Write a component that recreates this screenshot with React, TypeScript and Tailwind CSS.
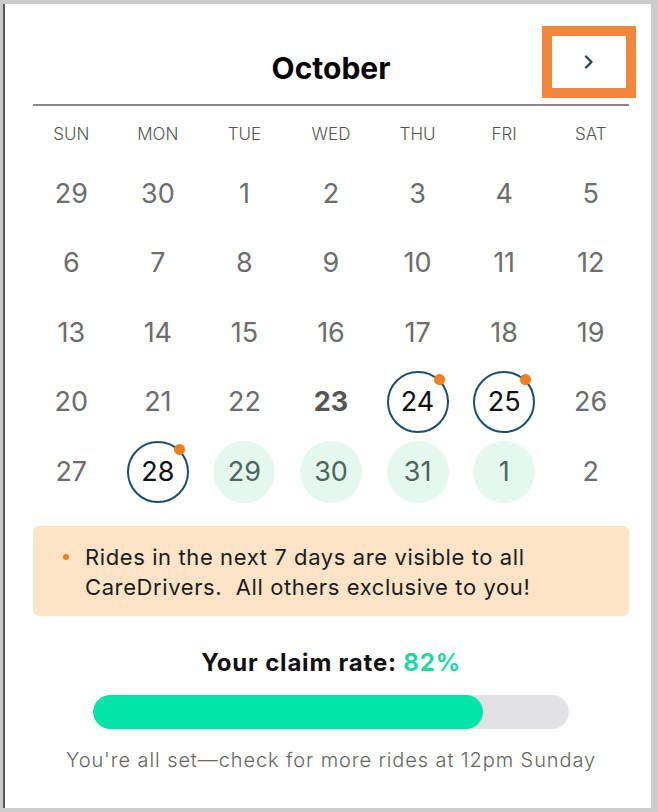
import React from "react";

type Day = {
   n: number;
   kind?: "muted" | "today" | "ride" | "open";
};

const weekdays = ["SUN", "MON", "TUE", "WED", "THU", "FRI", "SAT"];

const weeks: Day[][] = [
   [{ n: 29 }, { n: 30 }, { n: 1 }, { n: 2 }, { n: 3 }, { n: 4 }, { n: 5 }],
   [{ n: 6 }, { n: 7 }, { n: 8 }, { n: 9 }, { n: 10 }, { n: 11 }, { n: 12 }],
   [{ n: 13 }, { n: 14 }, { n: 15 }, { n: 16 }, { n: 17 }, { n: 18 }, { n: 19 }],
   [
      { n: 20 },
      { n: 21 },
      { n: 22 },
      { n: 23, kind: "today" },
      { n: 24, kind: "ride" },
      { n: 25, kind: "ride" },
      { n: 26 },
   ],
   [
      { n: 27 },
      { n: 28, kind: "ride" },
      { n: 29, kind: "open" },
      { n: 30, kind: "open" },
      { n: 31, kind: "open" },
      { n: 1, kind: "open" },
      { n: 2 },
   ],
];

const DayCell = ({ day }: { day: Day }) => {
   if (day.kind === "ride") {
      return (
         <div className="relative w-[62px] h-[62px] rounded-full border-2 border-[#1d4d6e] flex items-center justify-center text-[27px] text-[#111]">
            {day.n}
            <span className="absolute top-[1px] left-[45px] w-[11px] h-[11px] rounded-full bg-[#f07f1c]" />
         </div>
      );
   }
   if (day.kind === "open") {
      return (
         <div className="w-[62px] h-[62px] rounded-full bg-[#e4f8ef] flex items-center justify-center text-[27px] text-[#4a6759]">
            {day.n}
         </div>
      );
   }
   if (day.kind === "today") {
      return <span className="text-[27px] font-bold text-[#555]">{day.n}</span>;
   }
   return <span className="text-[27px] text-[#6d6d6d]">{day.n}</span>;
};

const App = () => {
   return (
      <div
         className="w-[658px] h-[812px] bg-[#cbcbcb] pt-[4px] pl-[3px] pr-[7px] pb-[4px]"
         style={{ fontFamily: "Inter, Lato, sans-serif" }}
      >
         <div className="h-full bg-white border-l-2 border-[#5a5a5a] pl-[23px] pr-[17px]">
            {/* header */}
            <div className="relative h-[100px] flex items-end justify-center pb-[21px]">
               <h1 className="text-[30px] leading-none font-bold text-black">October</h1>
               <button className="absolute top-[22px] right-[-2px] w-[94px] h-[72px] border-[10px] border-[#f0873d] flex items-center justify-center">
                  <svg width="12" height="14" viewBox="0 0 12 14" fill="none">
                     <path d="M3 1.5L8.5 7L3 12.5" stroke="#1f4a68" strokeWidth="2.4" strokeLinecap="round" strokeLinejoin="round" />
                  </svg>
               </button>
            </div>
            <div className="mx-[5px] h-[2px] bg-[#8a8a8a]" />

            {/* calendar */}
            <div className="mt-[10px] grid grid-cols-7 h-[38px] items-center">
               {weekdays.map((d) => (
                  <span key={d} className="text-center text-[17px] font-light text-[#555]">
                     {d}
                  </span>
               ))}
            </div>
            <div className="mt-[5px]">
               {weeks.map((week, i) => (
                  <div key={i} className="grid grid-cols-7 h-[69.5px]">
                     {week.map((day, j) => (
                        <div key={j} className="flex items-center justify-center">
                           <DayCell day={day} />
                        </div>
                     ))}
                  </div>
               ))}
            </div>

            {/* notice */}
            <div className="mx-[5px] mt-[19px] rounded-[6px] bg-[#fde4c6] pt-[16px] pb-[14px] pl-[30px] pr-[20px] flex gap-[16px]">
               <span className="mt-[12px] w-[6px] h-[6px] rounded-full bg-[#f07f1c] shrink-0" />
               <p className="text-[22px] leading-[30px] tracking-[0.6px] text-[#1c1c1c]">
                  Rides in the next 7 days are visible to all
                  <br />
                  CareDrivers.&nbsp; All others exclusive to you!
               </p>
            </div>

            {/* claim rate */}
            <div className="mt-[32px] flex flex-col items-center">
               <p className="text-[24px] leading-[30px] font-bold tracking-[0.8px] text-[#111]">
                  Your claim rate: <span className="text-[#1fd9a2]">82%</span>
               </p>
               <div className="mt-[17px] w-[476px] h-[34px] rounded-full bg-[#e2e2e4] overflow-hidden">
                  <div className="h-full rounded-full bg-[#00e6a8]" style={{ width: "82%" }} />
               </div>
               <p className="mt-[18px] text-[20px] leading-[26px] font-light tracking-[0.9px] text-[#666]">
                  You're all set—check for more rides at 12pm Sunday
               </p>
            </div>
         </div>
      </div>
   );
};

export default App;
